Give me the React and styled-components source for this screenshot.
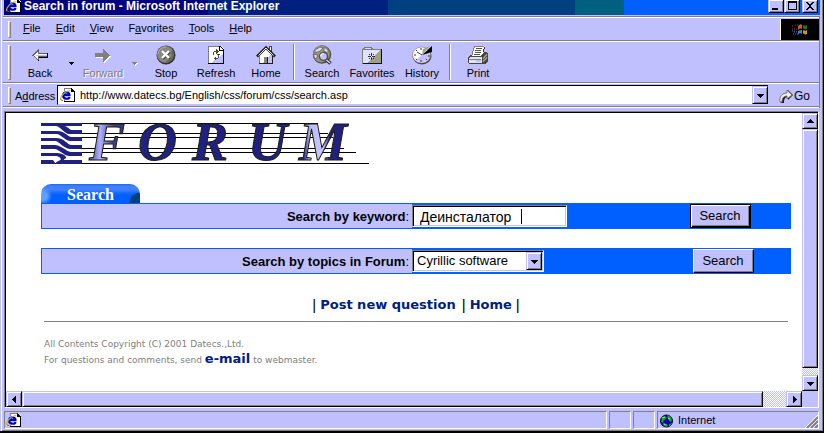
import React, { useState } from "react";
import styled, { createGlobalStyle, css } from "styled-components";

const face = "#c0c0ff";
const blue = "#0060ff";

const Global = createGlobalStyle`
  * { box-sizing: border-box; }
  body { margin: 0; background: ${face}; }
  button, input, select { font: inherit; margin: 0; }
`;

const raised = css`
  background: ${face};
  border: 1px solid;
  border-color: ${face} #000 #000 ${face};
  box-shadow: inset 1px 1px 0 #fff, inset -1px -1px 0 #808080;
`;

const Window = styled.div`
  display: flex;
  flex-direction: column;
  min-height: 100vh;
  padding: 0 3px 2px 3px;
  background: ${face};
  border-right: 1px solid #000;
  border-bottom: 2px solid #000;
  box-shadow: inset 1px 0 0 ${face}, inset 2px 0 0 #fff, inset -1px -1px 0 #808080;
  font: 11px/14px "Liberation Sans", Arial, sans-serif;
  color: #000;
`;

const TitleBar = styled.header`
  display: flex;
  height: 15px;
  margin-left: 1px;
  padding-right: 2px;
  color: #fff;
  font-weight: bold;
  background: linear-gradient(
    to right,
    #000080 25%, #002080 25% 47%, #004080 47% 70%, #006080 70% 76%, ${blue} 76%
  );
`;

const TitleIcon = styled.span`
  width: 20px;
  height: 14px;
  padding-left: 2px;
  overflow: hidden;
  display: flex;
  align-items: flex-end;
`;

const TitleText = styled.h1`
  flex: 1;
  margin: 0;
  font-size: 12px;
  line-height: 13px;
  white-space: nowrap;
`;

const WindowButton = styled.button`
  ${raised}
  display: flex;
  align-items: flex-end;
  justify-content: center;
  width: 16px;
  height: 13px;
  padding: 0 0 2px;
  border-top: 0;
  margin-left: ${(p) => (p.$apart ? "2px" : "0")};
`;

const Rebar = styled.div`
  margin-top: 1px;
  border-right: 1px solid #808080;
`;

const Band = styled.div`
  display: flex;
  align-items: stretch;
  height: ${(p) => p.$height};
  border-top: 1px solid #808080;
  box-shadow: inset 0 1px 0 #fff;
  padding: 2px 0 0 4px;
`;

const BandEdge = styled.div`
  height: 2px;
  border-top: 1px solid #808080;
  background: #fff;
`;

const Grip = styled.span`
  flex: none;
  width: 3px;
  margin: 2px 4px 2px 1px;
  border: 1px solid;
  border-color: #fff #808080 #808080 #fff;
`;

const Menu = styled.nav`
  display: flex;
  flex: 1;
  align-items: center;
  gap: 15px;
  padding: 0 0 3px 8px;
`;

const MenuItem = styled.button`
  padding: 0;
  border: 0;
  background: none;
  color: #000;
`;

const Throbber = styled.div`
  display: flex;
  align-items: center;
  justify-content: center;
  width: 39px;
  background: #000;
  border-left: 1px solid #fff;
`;

const ToolButton = styled.button`
  display: flex;
  flex-direction: column;
  align-items: center;
  width: 50px;
  padding: 2px 0 0;
  border: 0;
  background: none;
  color: #000;
  line-height: 14px;
  svg { flex: none; margin-bottom: 1px; }
  &:disabled { color: #808080; text-shadow: 1px 1px 0 #fff; }
`;

const DropButton = styled.button`
  width: 13px;
  padding: 0;
  border: 0;
  background: none;
`;

const Divider = styled.span`
  width: 2px;
  margin: 1px 2px 2px;
  border-left: 1px solid #808080;
  border-right: 1px solid #fff;
`;

const AddressLabel = styled.label`
  width: 42px;
  align-self: center;
`;

const AddressBox = styled.div`
  display: flex;
  flex: 1;
  height: 20px;
  background: #fff;
  border-top: 1px solid #000;
  border-left: 1px solid #000;
  border-bottom: 1px solid ${face};
  align-items: center;
  padding-left: 2px;
`;

const AddressInput = styled.input`
  flex: 1;
  min-width: 0;
  padding: 0 0 0 4px;
  border: 0;
  outline: 0;
  background: transparent;
`;

const Arrow = styled.button`
  ${raised}
  display: flex;
  flex: none;
  align-items: center;
  justify-content: center;
  width: 16px;
  height: ${(p) => p.$height || "16px"};
  padding: 0;
`;

const GoButton = styled.button`
  display: flex;
  align-items: center;
  gap: 0;
  width: 51px;
  padding: 0 0 0 10px;
  border: 0;
  background: none;
  color: #000;
  font-size: 12px;
`;

const View = styled.div`
  display: grid;
  flex: 1;
  grid-template-columns: minmax(0, 1fr) 16px;
  grid-template-rows: 1fr 16px;
  margin: 3px 1px 0;
  border: 1px solid;
  border-color: #808080 #fff #fff #808080;
`;

const Page = styled.main`
  padding: 10px 11px 0 35px;
  background: #fff;
  border: solid #000;
  border-width: 1px 0 0 1px;
  font-size: 13px;
`;

const ScrollBar = styled.div`
  display: flex;
  flex-direction: ${(p) => (p.$vertical ? "column" : "row")};
  border-${(p) => (p.$vertical ? "top" : "left")}: 1px solid #000;
  background: repeating-conic-gradient(#fff 0 25%, ${face} 0 50%) 0 0 / 2px 2px;
`;

const Thumb = styled.div`
  ${raised}
  flex: ${(p) => p.$size};
`;

const Track = styled.div`
  flex: ${(p) => p.$size};
`;

const Logo = styled.svg`
  display: block;
  overflow: visible;
`;

const Tab = styled.h2`
  width: 99px;
  height: 19px;
  margin: 19px 0 0;
  border-radius: 10px 10px 0 0;
  background:
    radial-gradient(circle at 100% 100%, #004080 10px, transparent 11px),
    radial-gradient(circle at 2px 12px, #60a0ff 4px, transparent 9px),
    linear-gradient(to bottom, #2070ff 0 1px, #4080ff 2px 6px, #2070ff 8px, ${blue} 11px);
  color: #fff;
  text-align: center;
  font: bold 16px/21px "Liberation Serif", "Times New Roman", serif;
`;

const SearchForm = styled.form`
  display: grid;
  grid-template-columns: 370fr ${(p) => p.$columns};
  align-items: center;
  height: 26px;
  margin-bottom: 19px;
  border: 1px solid ${blue};
  background: ${blue};
`;

const FieldLabel = styled.label`
  height: 24px;
  padding-right: 3px;
  background: ${face};
  text-align: right;
  line-height: 25px;
  white-space: nowrap;
`;

const Field = styled.div`
  position: relative;
  display: flex;
  width: ${(p) => p.$width};
  height: 22px;
  background: #fff;
  border: 1px solid;
  border-color: #808080 #fff #fff #808080;
  box-shadow: inset 1px 1px 0 #000, inset -1px -1px 0 ${face};
  padding: 1px;
`;

const TextInput = styled.input`
  width: 100%;
  padding: 1px 0 0 6px;
  border: 0;
  outline: 0;
  background: transparent;
  font-size: 14px;
`;

const Caret = styled.span`
  position: absolute;
  left: 108px;
  top: 3px;
  width: 1px;
  height: 15px;
  background: #000;
`;

const Select = styled.select`
  appearance: none;
  flex: 1;
  width: 100%;
  padding: 0 0 0 3px;
  border: 0;
  outline: 0;
  background: transparent;
`;

const SelectArrow = styled.span`
  ${raised}
  position: absolute;
  right: 1px;
  top: 1px;
  display: flex;
  align-items: center;
  justify-content: center;
  width: 16px;
  height: 18px;
  pointer-events: none;
`;

const SubmitButton = styled.button`
  justify-self: center;
  width: 61px;
  height: 24px;
  padding: 0;
  color: #000;
  background: ${face};
  border: 1px solid;
  border-color: ${(p) => (p.$default ? "#000" : "#fff #000 #000 #fff")};
  box-shadow: ${(p) =>
    p.$default
      ? "inset 1px 1px 0 #fff, inset -1px -1px 0 #000, inset -2px -2px 0 #808080"
      : "inset -1px -1px 0 #808080"};
`;

const Links = styled.nav`
  display: flex;
  justify-content: center;
  gap: 4px;
  margin-top: 22px;
  line-height: 18px;
`;

const Link = styled.a`
  color: #002080;
  font: bold 13px/17px "DejaVu Sans", Verdana, sans-serif;
  text-decoration: none;
`;

const Bar = styled.span`
  font-size: 15px;
  margin-left: ${(p) => (p.$gap ? "2px" : "0")};
`;

const Rule = styled.hr`
  height: 1px;
  margin: 7px 3px 14px;
  border: 0;
  background: #808080;
`;

const Footer = styled.footer`
  padding-left: 3px;
  color: #808080;
  font: 9px/16px "DejaVu Sans", Verdana, sans-serif;
  p { margin: 0; }
  ${Link} { line-height: 14px; }
`;

const StatusBar = styled.footer`
  display: flex;
  gap: 2px;
  height: 18px;
  margin: 3px 1px 0;
`;

const Panel = styled.div`
  display: flex;
  align-items: center;
  gap: 4px;
  flex: ${(p) => (p.$width ? `0 0 ${p.$width}` : "1")};
  padding: 0 0 0 ${(p) => (p.$indent ? "1px" : "0")};
  border: 1px solid;
  border-color: #808080 #fff #fff #808080;
`;

const GripBox = styled.span`
  display: flex;
  margin-left: auto;
  align-self: flex-end;
`;

const Icon = ({ size = 20, children }) => (
  <svg width={size} height={size} viewBox={`0 0 ${size} ${size}`} shapeRendering="crispEdges" aria-hidden="true">
    {children}
  </svg>
);

const Triangle = ({ dir = "down", color = "#000", small }) => {
  const shapes = {
    down: "M0 2h7v1h-1v1h-1v1h-1v1h-1v-1h-1v-1h-1v-1h-1z",
    up: "M3 1h1v1h1v1h1v1h1v1h-7v-1h1v-1h1v-1h1z",
    left: "M5 0v7h-1v-1h-1v-1h-1v-1h-1v-1h1v-1h1v-1h1v-1z",
    right: "M2 0v7h1v-1h1v-1h1v-1h1v-1h-1v-1h-1v-1h-1v-1z",
    small: "M1 2h5v1h-1v1h-1v1h-1v-1h-1v-1h-1z",
  };
  return (
    <svg width="7" height="7" viewBox="0 0 7 7" shapeRendering="crispEdges" aria-hidden="true">
      {small && color !== "#000" && <path d={shapes.small} fill="#fff" transform="translate(1 1)" />}
      <path d={small ? shapes.small : shapes[dir]} fill={color} />
    </svg>
  );
};

const PageIcon = () => (
  <Icon size={16}>
    <path d="M4 1h8l3 3v11H4z" fill="#fff" />
    <path d="M4 1h8M4 1v3M4 13v2" stroke="#808080" fill="none" />
    <path d="M11 1h1v1h1v1h1v1h1v11H4v-1h10V5h-3z" fill="#000" />
    <g shapeRendering="auto" fill="none">
      <path d="M9.500 10C9 12.500 3 12.500 3.200 8.500S9.700 4.500 9.500 8.200H4" stroke="#0000c0" strokeWidth="2.200" />
      <path d="M1 13C-1 10 6 3.500 10.500 3.500" stroke="#d0b020" strokeWidth="1.200" />
      <path d="M1 13l2 .5" stroke="#707000" />
      <path d="M4 6l2-1" stroke="#00a0ff" />
    </g>
  </Icon>
);

const BackIcon = () => (
  <Icon>
    <path d="M2 10h1V9h1V8h1V7h1V6h1V5h1V4h1v4h8v5H9v3H8v-1H7v-1H6v-1H5v-1H4v-1H2z" fill="#606060" />
    <path d="M4 10h1V9h1V8h1V7h1v2h9v2H8v3H7v-1H6v-1H5v-1H4z" fill="#fff" />
    <path d="M6 10h11v1H6z" fill={face} />
    <path d="M9 12h8v1H9zM17 8h1v5h-1zM8 15h1v1H8z" fill="#000" />
  </Icon>
);

const forwardShape = "M2 8h8V4h1v1h1v1h1v1h1v1h1v1h1v1h1v1h-1v1h-1v1h-1v1h-1v1h-1v1h-1v1h-1v-5H2z";
const ForwardIcon = () => (
  <Icon>
    <path d={forwardShape} fill="#fff" transform="translate(1 1)" />
    <path d={forwardShape} fill="#808080" />
  </Icon>
);

const StopIcon = () => (
  <Icon>
    <g shapeRendering="auto">
      <circle cx="10" cy="10" r="9.500" fill="#303030" />
      <circle cx="9.500" cy="9.500" r="8.500" fill="#888880" />
      <path d="M2 9a8 8 0 0 1 8-7" fill="none" stroke="#b0b0b0" />
      <path d="M16 6c2 6-1 10-6 11" fill="none" stroke="#686850" strokeWidth="2" />
      <path d="M7 7l7 7M14 7l-7 7" stroke="#484848" strokeWidth="2.200" />
      <path d="M6 6l7 7M13 6l-7 7" stroke="#fff" strokeWidth="2.400" />
    </g>
  </Icon>
);

const RefreshIcon = () => (
  <Icon>
    <path d="M2 1h13l3 3v15H2z" fill="#fff" />
    <path d="M17 9v9H5z" fill={face} />
    <path d="M2 1h12v1H2zM2 1h1v18H2z" fill="#808080" />
    <path d="M13 1h1v4h3v1h-4zM14 1h1v1h-1zM15 2h1v1h-1zM16 3h1v1h-1zM17 4h1v15h-1zM2 18h16v1H2z" fill="#000" />
    <path d="M10 4h1v1h1v1h1v1h-1v1h-1v1h-1V7H8v3H7V7h1V6h2zM13 9h1v1h-1v3h-1v1h-2v1H9v-1H8v-1h1v-1h1v1h2v-3h-1V9h1z" fill="#484828" />
  </Icon>
);

const HomeIcon = () => (
  <Icon>
    <path d="M13.500 1.500h2v5h-2z" fill="#fff" stroke="#404030" />
    <path d="M4 10l6-7 6 7v9H4z" fill="#fff" />
    <path d="M5 19L16 9v10z" fill={face} />
    <g shapeRendering="auto" fill="none">
      <path d="M1 11.500L10 2.500l9 9" stroke="#202018" strokeWidth="2.600" />
      <path d="M2.500 10.500L10 3l7.500 7.500" stroke="#e8e8d8" strokeWidth="1" />
    </g>
    <path d="M3 11h1v8H3z" fill="#808068" />
    <path d="M16 11h1v8h-1zM3 18h14v1H3z" fill="#202018" />
    <path d="M8 12h4v6H8z" fill="#888870" />
    <path d="M11 12h1v6h-1z" fill="#202018" />
  </Icon>
);

const SearchIcon = () => (
  <Icon>
    <g shapeRendering="auto">
      <circle cx="10" cy="9.500" r="9.200" fill="#484840" />
      <circle cx="9.500" cy="9" r="8.400" fill="#989880" />
      <path d="M3 5l5-3 3 1-3 3-5 2zM12 2l4 3v3l-4-2zM1.500 9l4 1-1 4-2-1z" fill="#dcdcff" stroke="#606058" strokeWidth=".8" />
      <path d="M14 14.500l4.500 4" stroke="#303030" strokeWidth="3.600" />
      <path d="M14 14.500l4 3.500" stroke="#e0e0ff" strokeWidth="1.300" />
      <circle cx="11.500" cy="11.500" r="4" fill={face} stroke="#505048" strokeWidth="1.500" />
      <path d="M8.700 11.500a3 3 0 0 1 3-3" fill="none" stroke="#fff" strokeWidth="1.200" />
    </g>
  </Icon>
);

const FavoritesIcon = () => (
  <Icon>
    <path d="M1 5V3h1V2h7v1h1v1h2v1z" fill="#d8d8ff" />
    <path d="M1 5V3h1V2h7v1h1v1h2v1" fill="none" stroke="#808068" />
    <path d="M0 5h20v14H0z" fill="#e0e0ff" />
    <path d="M19 5v13H5z" fill="#a0a088" />
    <path d="M0 4h20v1H0zM0 4h1v15H0z" fill="#808070" />
    <path d="M19 4h1v15h-1zM1 18h19v1H1z" fill="#101010" />
    <path d="M9 8h1v7H9zM6 11h7v1H6zM7 9h1v1H7zM11 9h1v1h-1zM7 13h1v1H7zM11 13h1v1h-1z" fill="#303020" />
    <path d="M9 11h1v1H9z" fill="#fff" />
  </Icon>
);

const HistoryIcon = () => (
  <Icon>
    <g shapeRendering="auto">
      <ellipse cx="10" cy="11" rx="9.500" ry="8.500" fill="#404040" />
      <ellipse cx="9.500" cy="10" rx="9" ry="8" fill="#fff" stroke="#808080" strokeWidth=".6" />
      <path d="M16 5c4 5 1 12-6 12-3 0-5-1-6-2z" fill={face} />
      <path d="M10 10l10-9v6z" fill="#000" />
      <path d="M10 10L18 1l-7 3z" fill="#a0a088" />
      <path d="M9 3v2M2 10h2M16 11h2M9 15v2M4 5l1 1M4 15l1-1M14 14l1 1" stroke="#303030" />
      <path d="M10 10l-5-3" stroke="#404040" />
    </g>
  </Icon>
);

const PrintIcon = () => (
  <Icon>
    <path d="M6 1h11l-3 11H3z" fill="#fff" />
    <path d="M6 1h10M6 1v2M5 3v3M4 6v4" stroke="#808070" fill="none" />
    <path d="M8 3h6v1H8zM7 5h6v1H7zM7 7h6v1H7zM6 9h6v1H6z" fill="#505040" />
    <path d="M16 2h1v2h-1zM15 4h1v3h-1z" fill="#303030" />
    <path d="M2 10h2v1h9l3-4h2l2 2v7l-3 3H1l-1-2v-5z" fill="#484840" />
    <path d="M2 12h12v1H2zM1 13h13v5H1z" fill="#e0e0ff" />
    <path d="M1 14h12v1H1z" fill="#808070" />
    <path d="M8 15h5v2H8z" fill={face} />
    <path d="M15 12l4-3v2l-4 3zM15 15l4-3v2l-4 3z" fill="#a0a088" />
  </Icon>
);

const GoIcon = () => (
  <Icon size={16}>
    <g shapeRendering="auto">
      <path d="M2 15C1 9 4 5 9 5V2l5 5-5 5V9c-3 0-4 2-4 6z" fill="#202020" transform="translate(1 0)" />
      <path d="M2 14C1 9 4 5 9 5V2l5 5-5 4V8c-4 0-5 3-5 6z" fill="#f0f0e8" stroke="#606060" strokeWidth=".8" />
    </g>
  </Icon>
);

const GlobeIcon = () => (
  <Icon size={15}>
    <g shapeRendering="auto">
      <circle cx="7.500" cy="8" r="6" fill="#0000b0" stroke="#000050" />
      <path d="M3 4l3-1 2 2-3 2-1 3-2-1zM8 2l4 2 1 4-2 1-2-3zM4 10l4 1 1 2-2 1-3-2zM10 11l3-1-2 3-1 1z" fill="#20a020" />
      <path d="M3 5l3-1M9 5l2 1M5 11l2 1" stroke="#a0e080" />
    </g>
  </Icon>
);

const FlagLogo = () => (
  <svg width="20" height="18" viewBox="0 0 20 18" aria-hidden="true">
    <path d="M8 5c2-2 3-2 4-1v4c-2-1-3 0-4 1z" fill="#c06030" />
    <path d="M13 4c2 1 3 1 4 0v4c-2 1-3 0-4-1z" fill="#307020" />
    <path d="M8 10c2-1 3-1 4-1v4c-1-1-3-1-4 1z" fill="#4080c0" />
    <path d="M13 9c2 1 3 1 4 0v4c-2 1-3 0-4-1z" fill="#c0a010" />
    <path d="M2 5h2M5 4h3M2 8h3M6 8h2" stroke="#904830" strokeDasharray="1 1" />
    <path d="M3 13h5M2 10h4M4 11h4" stroke="#4070b0" strokeDasharray="1 1" />
  </svg>
);

const ForumLogo = () => (
  <Logo width="328" height="42" viewBox="0 0 328 42" role="img" aria-label="Forum">
    <defs>
      <linearGradient id="metal" x1="0" y1="0" x2="328" y2="0" gradientUnits="userSpaceOnUse">
        <stop offset="0.140" stopColor="#303080" />
        <stop offset="0.180" stopColor="#b0b0ff" />
        <stop offset="0.220" stopColor="#404090" />
        <stop offset="0.320" stopColor="#202080" />
        <stop offset="0.800" stopColor="#202080" />
        <stop offset="0.820" stopColor="#b8b8ff" />
        <stop offset="0.860" stopColor="#c8c8ff" />
        <stop offset="0.880" stopColor="#202080" />
      </linearGradient>
    </defs>
    <path
      d="M41 .5H277M41 10.500H287M41 14.500H292M41 25.500H303M41 29.500H315M0 40.500H328"
      stroke="#000"
      shapeRendering="crispEdges"
    />
    <path
      d="M0 0H41V3H24C27 4 28 6 30 7H41V11H27C22 9 20 4 15 3H0zM0 8H16C24 8 26 13 30 14H41V18H29C23 17 21 12 16 11H0zM0 15H15C24 15 25 21 30 22H41V26H29C22 25 20 20 15 18H0zM0 22H14C22 23 24 28 30 29H41V33H28C22 32 19 27 14 26H0zM0 30H14C20 30 23 31 25 34C26 36 22 36 23 37H41V41H15C14 38 20 38 20 36C18 33 16 33 14 33H0zM0 37H12L15 41H0z"
      fill="#202080"
    />
    <text
      x="48 97 151 207 258"
      y="37"
      fill="url(#metal)"
      stroke="#202010"
      strokeWidth="1"
      fontFamily="Liberation Serif, Times New Roman, serif"
      fontSize="54"
      fontWeight="bold"
      fontStyle="italic"
    >
      FORUM
    </text>
  </Logo>
);

const Accel = ({ text, at = 0 }) => (
  <>
    {text.slice(0, at)}
    <u>{text[at]}</u>
    {text.slice(at + 1)}
  </>
);

const menus = [["File"], ["Edit"], ["View"], ["Favorites", 1], ["Tools"], ["Help"]];

const Tool = ({ icon: Glyph, label, disabled }) => (
  <ToolButton type="button" disabled={disabled}>
    <Glyph />
    {label}
  </ToolButton>
);

const stop = (e) => e.preventDefault();

export default function App() {
  const [url, setUrl] = useState("http://www.datecs.bg/English/css/forum/css/search.asp");
  const [keyword, setKeyword] = useState("Деинсталатор ");
  return (
    <Window>
      <Global />
      <TitleBar>
        <TitleIcon><PageIcon /></TitleIcon>
        <TitleText>Search in forum - Microsoft Internet Explorer</TitleText>
        <WindowButton type="button" aria-label="Minimize">
          <svg width="8" height="8" shapeRendering="crispEdges"><path d="M0 6h6v2H0z" /></svg>
        </WindowButton>
        <WindowButton type="button" aria-label="Maximize">
          <svg width="9" height="9" shapeRendering="crispEdges"><path d="M0 0h9v9H0zM1 2v6h7V2z" fillRule="evenodd" /></svg>
        </WindowButton>
        <WindowButton type="button" aria-label="Close" $apart>
          <svg width="8" height="8" shapeRendering="crispEdges">
            <path d="M0 0h2v1h1v1h2V1h1V0h2v1H7v1H6v1H5v2h1v1h1v1h1v1H6V7H5V6H3v1H2v1H0V7h1V6h1V5h1V3H2V2H1V1H0z" />
          </svg>
        </WindowButton>
      </TitleBar>

      <Rebar>
        <Band $height="24px">
          <Grip />
          <Menu>
            {menus.map(([text, at]) => (
              <MenuItem type="button" key={text}><Accel text={text} at={at} /></MenuItem>
            ))}
          </Menu>
          <Throbber><FlagLogo /></Throbber>
        </Band>
        <Band $height="42px">
          <Grip />
          <Tool icon={BackIcon} label="Back" />
          <DropButton type="button" aria-label="Back list"><Triangle small /></DropButton>
          <Tool icon={ForwardIcon} label="Forward" disabled />
          <DropButton type="button" aria-label="Forward list"><Triangle small color="#808080" /></DropButton>
          <Tool icon={StopIcon} label="Stop" />
          <Tool icon={RefreshIcon} label="Refresh" />
          <Tool icon={HomeIcon} label="Home" />
          <Divider />
          <Tool icon={SearchIcon} label="Search" />
          <Tool icon={FavoritesIcon} label="Favorites" />
          <Tool icon={HistoryIcon} label="History" />
          <Divider />
          <Tool icon={PrintIcon} label="Print" />
        </Band>
        <Band $height="24px">
          <Grip />
          <AddressLabel htmlFor="address"><Accel text="Address" at={1} /></AddressLabel>
          <AddressBox>
            <PageIcon />
            <AddressInput id="address" value={url} onChange={(e) => setUrl(e.target.value)} />
            <Arrow type="button" $height="18px" aria-label="Address list"><Triangle /></Arrow>
          </AddressBox>
          <GoButton type="button"><GoIcon />Go</GoButton>
        </Band>
        <BandEdge />
      </Rebar>

      <View>
        <Page>
          <ForumLogo />
          <Tab>Search</Tab>
          <SearchForm $columns="238fr 140fr" onSubmit={stop}>
            <FieldLabel htmlFor="keyword"><b>Search by keyword</b>:</FieldLabel>
            <Field $width="155px">
              <TextInput id="keyword" value={keyword} onChange={(e) => setKeyword(e.target.value)} />
              <Caret />
            </Field>
            <SubmitButton $default>Search</SubmitButton>
          </SearchForm>
          <SearchForm $columns="244fr 134fr" onSubmit={stop}>
            <FieldLabel htmlFor="topic"><b>Search by topics in Forum</b>:</FieldLabel>
            <Field $width="132px">
              <Select id="topic"><option>Cyrillic software</option></Select>
              <SelectArrow><Triangle /></SelectArrow>
            </Field>
            <SubmitButton>Search</SubmitButton>
          </SearchForm>
          <Links>
            <Bar>|</Bar>
            <Link href="#post">Post new question</Link>
            <Bar $gap>|</Bar>
            <Link href="#home">Home</Link>
            <Bar>|</Bar>
          </Links>
          <Rule />
          <Footer>
            <p>All Contents Copyright (C) 2001 Datecs.,Ltd.</p>
            <p>For questions and comments, send <Link href="#mail">e-mail</Link> to webmaster.</p>
          </Footer>
        </Page>
        <ScrollBar $vertical>
          <Arrow type="button" aria-label="Scroll up"><Triangle dir="up" /></Arrow>
          <Thumb $size={239} />
          <Track $size={7} />
          <Arrow type="button" aria-label="Scroll down"><Triangle /></Arrow>
        </ScrollBar>
        <ScrollBar>
          <Arrow type="button" aria-label="Scroll left"><Triangle dir="left" /></Arrow>
          <Thumb $size={741} />
          <Track $size={23} />
          <Arrow type="button" aria-label="Scroll right"><Triangle dir="right" /></Arrow>
        </ScrollBar>
      </View>

      <StatusBar>
        <Panel $indent><PageIcon /></Panel>
        <Panel $width="22px" />
        <Panel $width="22px" />
        <Panel $width="162px" $indent>
          <GlobeIcon />
          Internet
          <GripBox>
            <svg width="13" height="13" viewBox="0 0 13 13" aria-hidden="true">
              <path d="M0 13L13 0M4 13l9-9M8 13l5-5" stroke="#fff" />
              <path d="M2 13L13 2M6 13l7-7M10 13l3-3" stroke="#808080" strokeWidth="2" />
            </svg>
          </GripBox>
        </Panel>
      </StatusBar>
    </Window>
  );
}
